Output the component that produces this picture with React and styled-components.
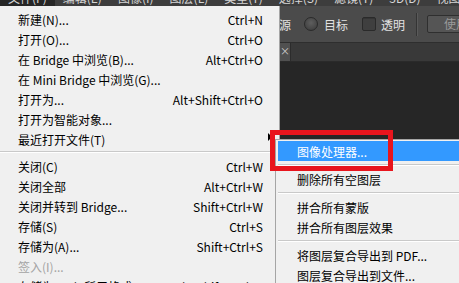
import styled, { createGlobalStyle } from "styled-components";

const GlobalStyle = createGlobalStyle`
  html, body {
    margin: 0;
    padding: 0;
    background: #282828;
  }
  body {
    font-family: "Noto Sans CJK SC", "Noto Sans", sans-serif;
    font-size: 12px;
  }
`;

const Screen = styled.div`
  position: relative;
  width: 459px;
  height: 283px;
  overflow: hidden;
  background: #282828;
  display: flex;
  flex-direction: column;
`;

const MenuBar = styled.div`
  height: 6px;
  flex: none;
  display: flex;
  align-items: flex-end;
  overflow: hidden;
  background: #3d3d3d;
  color: #d6d6d6;
`;

const MenuBarItem = styled.div`
  height: 6px;
  padding: 0 8px;
  display: flex;
  align-items: flex-end;
  line-height: 14px;
  white-space: nowrap;
  background: ${(p) => (p.active ? "#262626" : "transparent")};
  span {
    display: block;
    margin-bottom: 1px;
  }
`;

const OptionsBar = styled.div`
  height: 36px;
  flex: none;
  display: flex;
  align-items: center;
  padding-left: 279px;
  background: #4b4b4b;
  border-bottom: 1px solid #2e2e2e;
  color: #e2e2e2;
  white-space: nowrap;
`;

const OptLabel = styled.span`
  margin-right: ${(p) => p.gap || 0}px;
`;

const Radio = styled.span`
  width: 12px;
  height: 12px;
  border-radius: 50%;
  border: 1px solid #2a2a2a;
  background: radial-gradient(circle at 50% 40%, #5e5e5e, #3a3a3a);
  margin-right: 6px;
  flex: none;
`;

const Checkbox = styled.span`
  width: 12px;
  height: 12px;
  border-radius: 2px;
  border: 1px solid #2a2a2a;
  background: #3f3f3f;
  box-shadow: inset 0 1px 0 #353535;
  margin-right: 5px;
  flex: none;
`;

const VSep = styled.span`
  width: 1px;
  height: 23px;
  background: #343434;
  border-right: 1px solid #5a5a5a;
  margin-right: 9px;
  flex: none;
`;

const OptButton = styled.span`
  height: 16px;
  padding: 0 14px 0 16px;
  border: 1px solid #2f2f2f;
  border-radius: 2px;
  background: #555555;
  color: #9a9a9a;
  line-height: 16px;
`;

const TabBar = styled.div`
  height: 18px;
  flex: none;
  display: flex;
  padding-left: 280px;
  background: #393939;
  border-bottom: 1px solid #2a2a2a;
`;

const Tab = styled.div`
  width: 10px;
  background: #505050;
  border-right: 1px solid #2c2c2c;
  color: #cfcfcf;
  font-size: 10px;
  line-height: 16px;
  text-align: right;
  overflow: hidden;
`;

const Canvas = styled.div`
  flex: 1;
  background: #262626;
`;

const Dropdown = styled.div`
  position: absolute;
  left: 0;
  top: 6px;
  width: 279px;
  padding-top: 3px;
  background: #f0f0f0;
  border-right: 1px solid #a5a5a5;
  color: #000;
`;

const Item = styled.div`
  position: relative;
  height: 20px;
  display: flex;
  align-items: center;
  justify-content: space-between;
  padding: 0 16px 0 ${(p) => p.indent || 18}px;
  white-space: nowrap;
  color: ${(p) => (p.disabled ? "#a3a3a3" : p.active ? "#fff" : "#000")};
  background: ${(p) => (p.active ? "#3399ff" : "transparent")};
`;

const Shortcut = styled.span``;

const Arrow = styled.span`
  position: absolute;
  right: 7px;
  top: 4px;
  width: 0;
  height: 0;
  border-top: 4px solid transparent;
  border-bottom: 4px solid transparent;
  border-left: 4px solid #000;
`;

const Separator = styled.div`
  height: 1px;
  margin: ${(p) => (p.sub ? "3px 0 3px" : "2px 0 3px")};
  background: #c9c9c9;
  border-bottom: 1px solid #fff;
`;

const Submenu = styled.div`
  position: absolute;
  left: 275px;
  top: 139px;
  width: 190px;
  padding: 1px 0 0 2px;
  background: #f0f0f0;
  border-left: 1px solid #a5a5a5;
  border-top: 1px solid #a5a5a5;
`;

const Highlight = styled.div`
  position: absolute;
  left: 270px;
  top: 130px;
  width: 113px;
  height: 31px;
  border: 5px solid #e8151d;
  pointer-events: none;
`;

const topMenus = ["文件(F)", "编辑(E)", "图像(I)", "图层(L)", "类型(Y)", "选择(S)", "滤镜(T)", "3D(D)", "视图(V)"];

const fileItems = [
  ["新建(N)...", "Ctrl+N"],
  ["打开(O)...", "Ctrl+O"],
  ["在 Bridge 中浏览(B)...", "Alt+Ctrl+O"],
  ["在 Mini Bridge 中浏览(G)...", ""],
  ["打开为...", "Alt+Shift+Ctrl+O"],
  ["打开为智能对象...", ""],
  ["最近打开文件(T)", "", "sub"],
  "-",
  ["关闭(C)", "Ctrl+W"],
  ["关闭全部", "Alt+Ctrl+W"],
  ["关闭并转到 Bridge...", "Shift+Ctrl+W"],
  ["存储(S)", "Ctrl+S"],
  ["存储为(A)...", "Shift+Ctrl+S"],
  ["签入(I)...", "", "disabled"],
  ["存储为 Web 所用格式...", "Alt+Shift+Ctrl+S"],
];

const subItems = [
  ["图像处理器...", "active"],
  "-",
  ["删除所有空图层"],
  "-",
  ["拼合所有蒙版"],
  ["拼合所有图层效果"],
  "-",
  ["将图层复合导出到 PDF..."],
  ["图层复合导出到文件..."],
];

const App = () => {
  return (
    <Screen>
      <GlobalStyle />
      <MenuBar>
        {topMenus.map((m, i) => (
          <MenuBarItem key={m} active={i === 0}>
            <span>{m}</span>
          </MenuBarItem>
        ))}
      </MenuBar>
      <OptionsBar>
        <OptLabel gap={13}>源</OptLabel>
        <Radio />
        <OptLabel gap={14}>目标</OptLabel>
        <Checkbox />
        <OptLabel gap={11}>透明</OptLabel>
        <VSep />
        <OptButton>使用图层</OptButton>
      </OptionsBar>
      <TabBar>
        <Tab>×</Tab>
      </TabBar>
      <Canvas />

      <Dropdown>
        {fileItems.map((it, i) =>
          it === "-" ? (
            <Separator key={i} />
          ) : (
            <Item key={i} disabled={it[2] === "disabled"}>
              <span>{it[0]}</span>
              <Shortcut>{it[1]}</Shortcut>
              {it[2] === "sub" && <Arrow />}
            </Item>
          )
        )}
      </Dropdown>

      <Submenu>
        {subItems.map((it, i) =>
          it === "-" ? (
            <Separator key={i} sub />
          ) : (
            <Item key={i} indent={19} active={it[1] === "active"}>
              <span>{it[0]}</span>
            </Item>
          )
        )}
      </Submenu>

      <Highlight />
    </Screen>
  );
};

export default App;
